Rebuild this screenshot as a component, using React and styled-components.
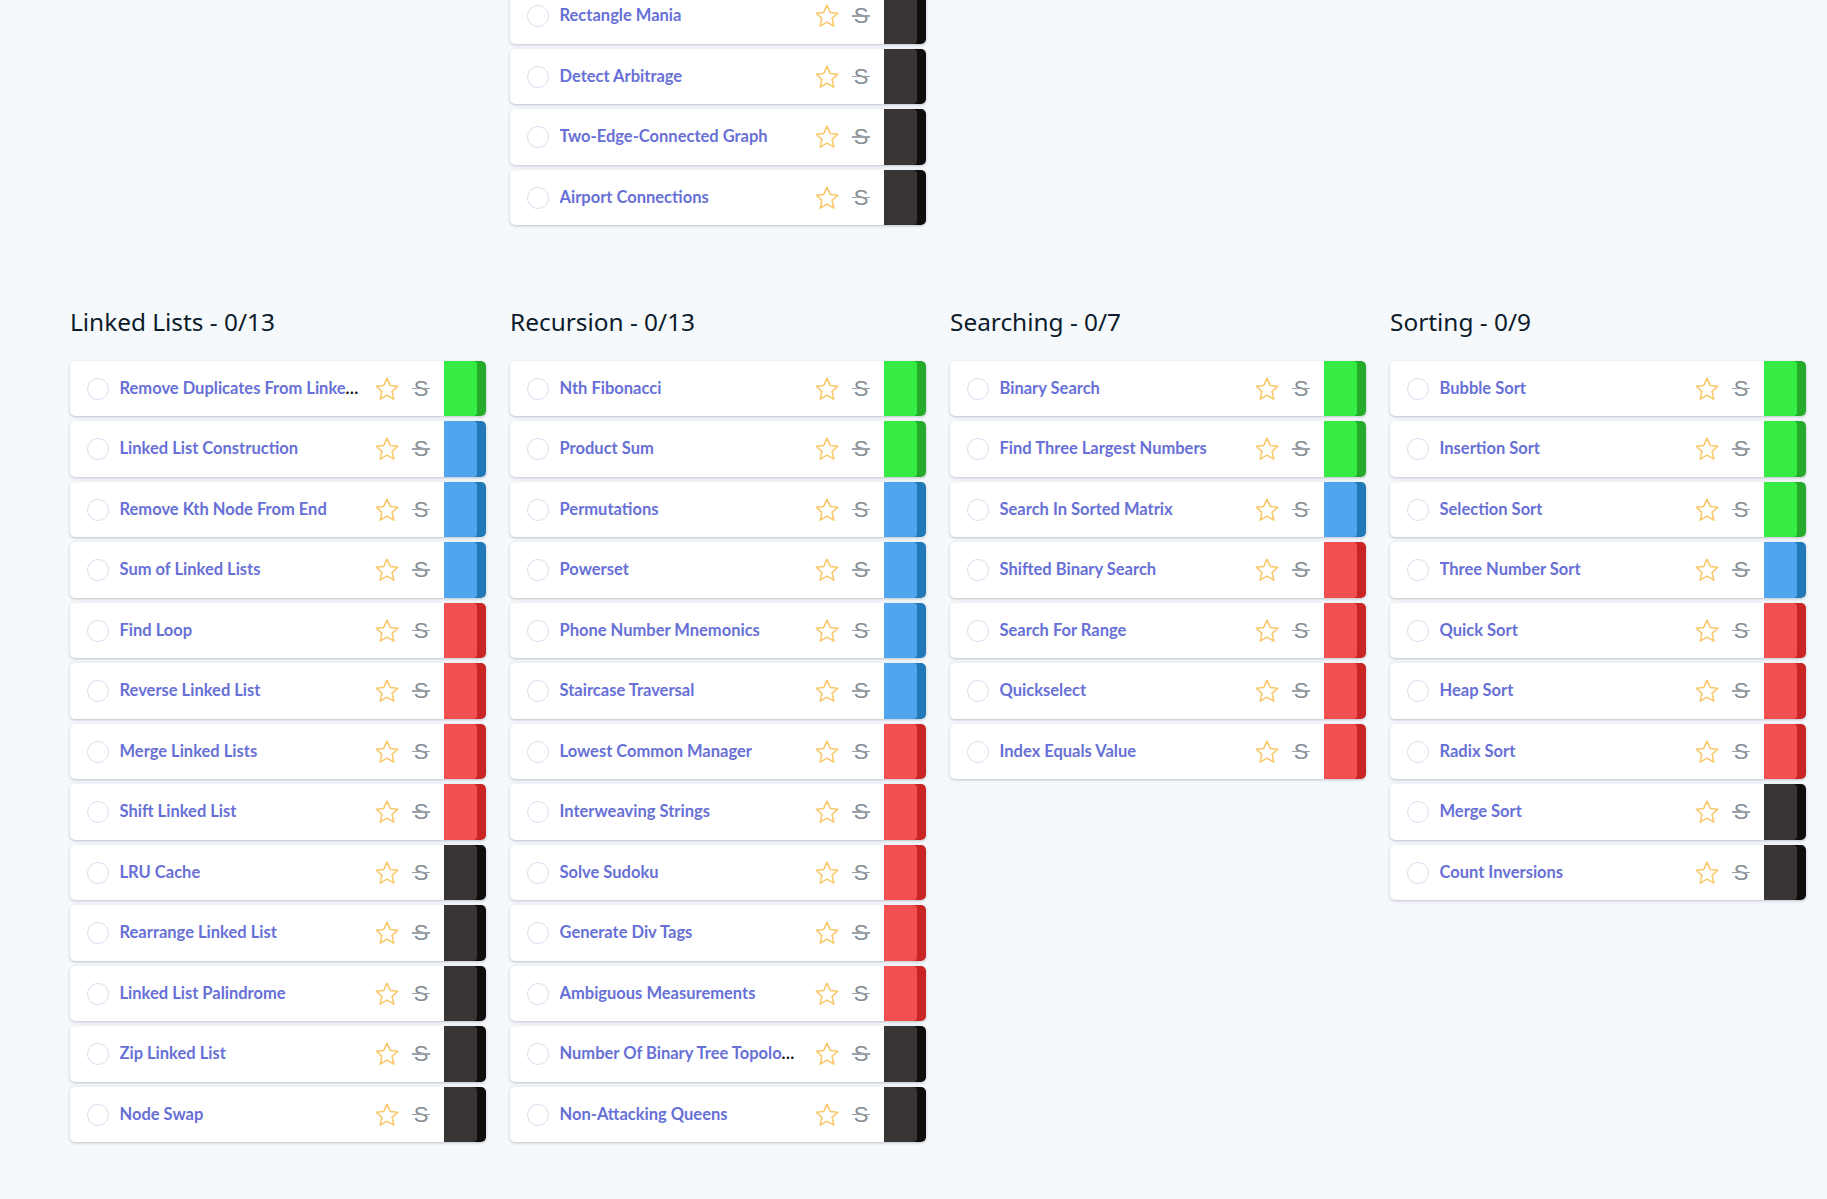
import React from 'react';
import styled, { createGlobalStyle } from 'styled-components';

const GlobalStyle = createGlobalStyle`
  html, body {
    margin: 0;
    padding: 0;
    background: #f5f9fc;
    height: 100%;
    overflow: hidden;
  }
`;

const DIFFICULTY = {
  e: { light: '#36ec44', dark: '#25ab2c' },
  m: { light: '#4fa6ee', dark: '#2279b9' },
  h: { light: '#f25050', dark: '#c92525' },
  x: { light: '#393534', dark: '#100e0d' },
};

const expand = (counts) =>
  Object.entries(counts).flatMap(([level, n]) => Array(n).fill(level));

const groups = [
  {
    title: 'Linked Lists - 0/13',
    levels: expand({ e: 1, m: 3, h: 4, x: 5 }),
    names: [
      'Remove Duplicates From Linked List',
      'Linked List Construction',
      'Remove Kth Node From End',
      'Sum of Linked Lists',
      'Find Loop',
      'Reverse Linked List',
      'Merge Linked Lists',
      'Shift Linked List',
      'LRU Cache',
      'Rearrange Linked List',
      'Linked List Palindrome',
      'Zip Linked List',
      'Node Swap',
    ],
  },
  {
    title: 'Recursion - 0/13',
    levels: expand({ e: 2, m: 4, h: 5, x: 2 }),
    names: [
      'Nth Fibonacci',
      'Product Sum',
      'Permutations',
      'Powerset',
      'Phone Number Mnemonics',
      'Staircase Traversal',
      'Lowest Common Manager',
      'Interweaving Strings',
      'Solve Sudoku',
      'Generate Div Tags',
      'Ambiguous Measurements',
      'Number Of Binary Tree Topologies',
      'Non-Attacking Queens',
    ],
  },
  {
    title: 'Searching - 0/7',
    levels: expand({ e: 2, m: 1, h: 4 }),
    names: [
      'Binary Search',
      'Find Three Largest Numbers',
      'Search In Sorted Matrix',
      'Shifted Binary Search',
      'Search For Range',
      'Quickselect',
      'Index Equals Value',
    ],
  },
  {
    title: 'Sorting - 0/9',
    levels: expand({ e: 3, m: 1, h: 3, x: 2 }),
    names: [
      'Bubble Sort',
      'Insertion Sort',
      'Selection Sort',
      'Three Number Sort',
      'Quick Sort',
      'Heap Sort',
      'Radix Sort',
      'Merge Sort',
      'Count Inversions',
    ],
  },
];

const topRows = ['Rectangle Mania', 'Detect Arbitrage', 'Two-Edge-Connected Graph', 'Airport Connections'];

const Star = () => (
  <StarIcon viewBox="0 0 24 24" aria-hidden="true">
    <path d="M12 2l3 6.7 7 .8-5.3 4.7 1.6 7.2-6.3-3.7-6.3 3.7 1.6-7.2L2 9.5l7-.8z" />
  </StarIcon>
);

const Row = ({ name, level }) => (
  <Card>
    <Circle />
    <Name>
      <NameLink>{name}</NameLink>
    </Name>
    <Star />
    <Strike>S</Strike>
    <Level $dark={DIFFICULTY[level].dark}>
      <LevelFill $light={DIFFICULTY[level].light} />
    </Level>
  </Card>
);

//Scrolled page: the previous category is cut off by the top edge
const App = () => (
  <Page>
    <GlobalStyle />
    <TopGrid>
      <Column $slot={2}>
        {topRows.map((name) => (
          <Row key={name} name={name} level="x" />
        ))}
      </Column>
    </TopGrid>
    <Grid>
      {groups.map((group) => (
        <Column key={group.title}>
          <Title>{group.title}</Title>
          {group.names.map((name, i) => (
            <Row key={name} name={name} level={group.levels[i]} />
          ))}
        </Column>
      ))}
    </Grid>
  </Page>
);

const Page = styled.div`
  width: 1827px;
  height: 1199px;
  overflow: hidden;
  padding-left: 70px;
  box-sizing: border-box;
`;
const Grid = styled.div`
  display: grid;
  grid-template-columns: repeat(4, 416px);
  column-gap: 24px;
  align-items: start;
`;
const TopGrid = styled(Grid)`
  margin-top: -12px;
  margin-bottom: 77.5px;
`;
const Column = styled.div`
  grid-column: ${(p) => p.$slot || 'auto'};
  display: flex;
  flex-direction: column;
  gap: 5px;
`;
const Title = styled.h2`
  margin: 0 0 16px;
  font-family: 'Noto Sans', sans-serif;
  font-size: 24.4px;
  line-height: 37px;
  font-weight: 400;
  color: #0d1b2a;
`;
const Card = styled.div`
  display: flex;
  align-items: center;
  height: 55.5px;
  flex: none;
  background: #fff;
  border-radius: 5px;
  box-shadow: 0 1px 3px rgba(60, 66, 87, 0.3);
`;
const Circle = styled.span`
  flex: none;
  box-sizing: border-box;
  width: 22px;
  height: 22px;
  margin: 1px 0 0 17px;
  border: 1px solid #dcdcee;
  border-radius: 50%;
`;
const Name = styled.span`
  flex: 1;
  min-width: 0;
  margin: -1px 0 0 10.5px;
  font-family: Lato, sans-serif;
  font-size: 16.5px;
  font-weight: 700;
  color: #14141c;
  white-space: nowrap;
  overflow: hidden;
  text-overflow: ellipsis;
`;
const NameLink = styled.span`
  color: #6770d6;
`;
const StarIcon = styled.svg`
  flex: none;
  width: 26px;
  height: 26px;
  margin: 1px 0 0 12px;
  fill: none;
  stroke: #f9c768;
  stroke-width: 1.4;
  stroke-linejoin: round;
`;
const Strike = styled.span`
  position: relative;
  flex: none;
  width: 18px;
  height: 18px;
  margin: 1px 0 0 12px;
  text-align: center;
  font-family: 'Liberation Sans', sans-serif;
  font-size: 22px;
  line-height: 18px;
  color: #868e96;

  &::after {
    content: '';
    position: absolute;
    left: 0;
    right: 0;
    top: 8px;
    height: 1.5px;
    background: #9aa1a8;
  }
`;
const Level = styled.div`
  flex: none;
  align-self: stretch;
  width: 42px;
  margin-left: 14px;
  border-radius: 0 5px 5px 0;
  background: ${(p) => p.$dark};
  overflow: hidden;
`;
const LevelFill = styled.div`
  width: 33px;
  height: 100%;
  border-radius: 0 4px 4px 0;
  background: ${(p) => p.$light};
`;

export default App;
